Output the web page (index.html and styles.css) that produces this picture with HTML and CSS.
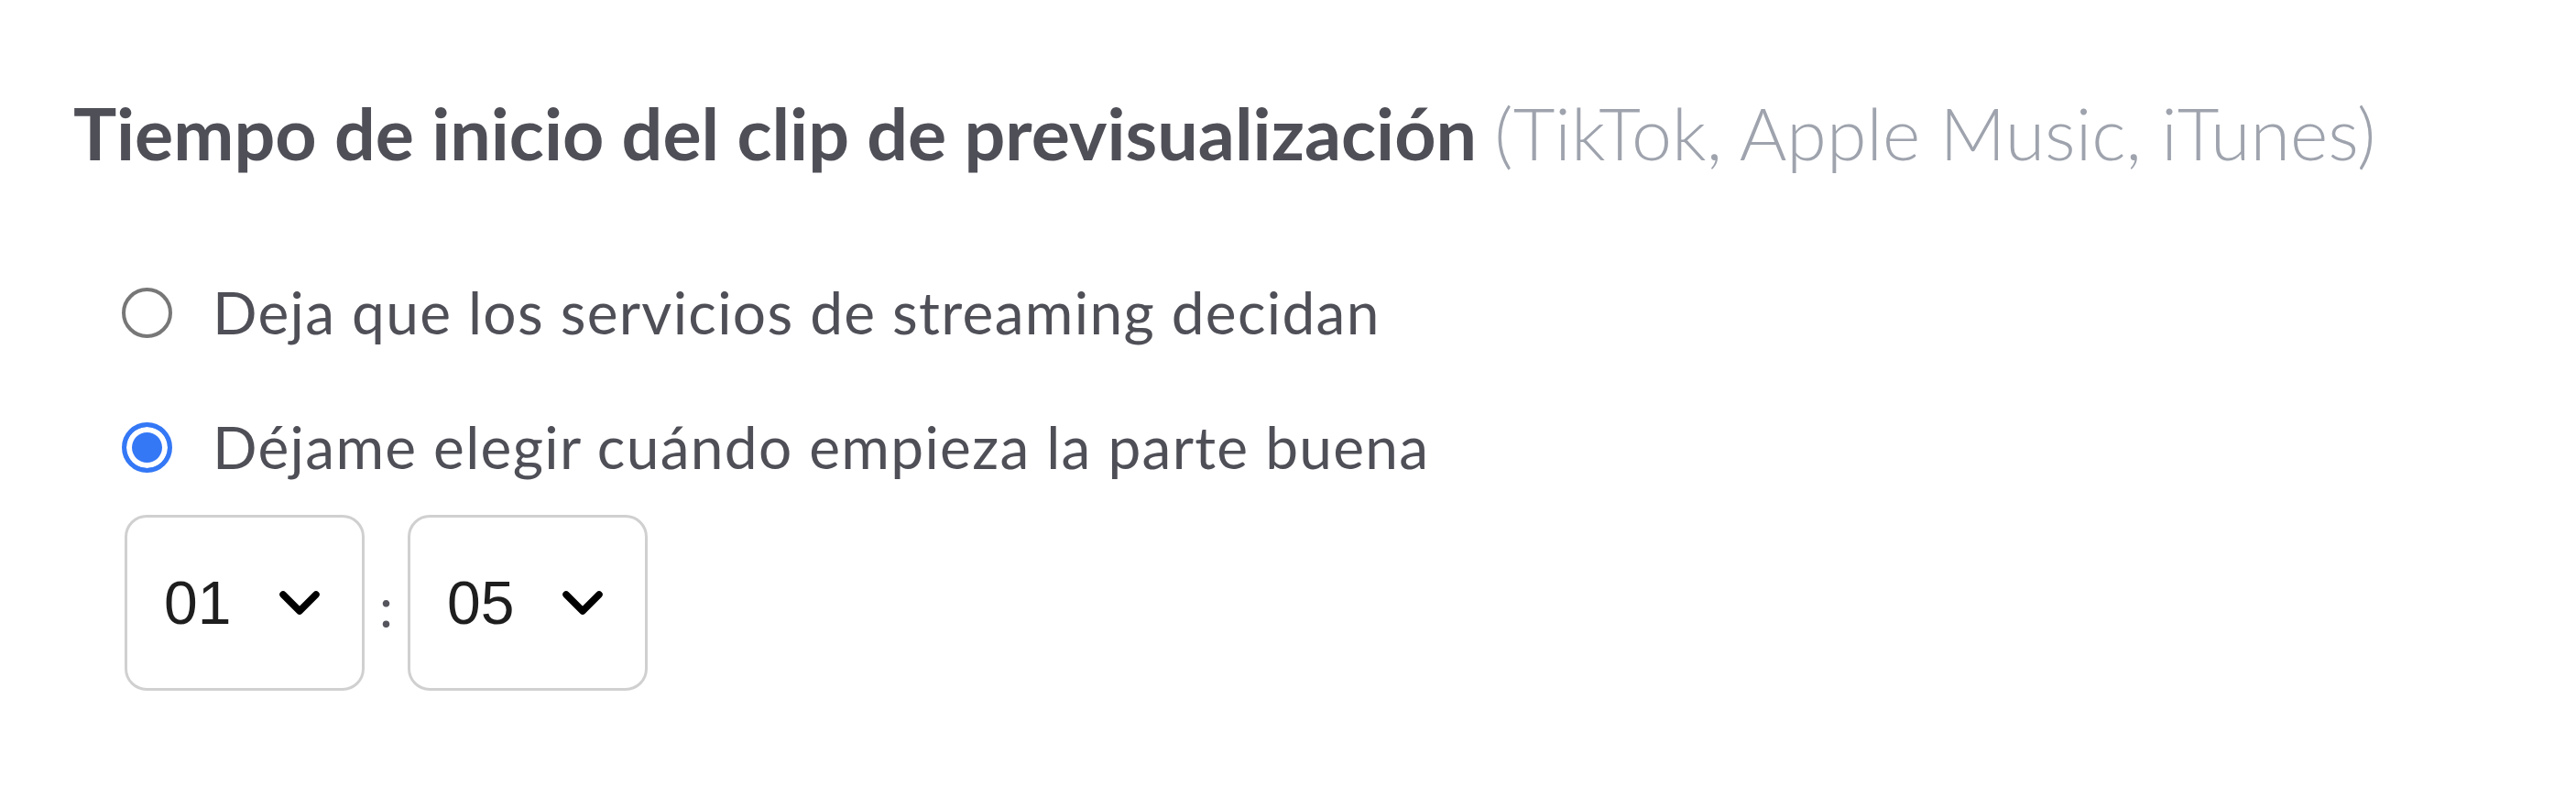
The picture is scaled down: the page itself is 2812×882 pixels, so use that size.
FILE: index.html
```html
<!DOCTYPE html>
<html lang="es">
<head>
<meta charset="utf-8">
<title>Tiempo de inicio del clip</title>
<link rel="stylesheet" href="styles.css">
</head>
<body>
<section class="panel">
  <h2 class="title">Tiempo de inicio del clip de previsualización <span class="title-note">(TikTok, Apple Music, iTunes)</span></h2>
  <div class="options">
    <label class="option">
      <input type="radio" name="clip" class="radio">
      <span class="option-text">Deja que los servicios de streaming decidan</span>
    </label>
    <label class="option">
      <input type="radio" name="clip" class="radio" checked>
      <span class="option-text">Déjame elegir cuándo empieza la parte buena</span>
    </label>
  </div>
  <div class="time">
    <div class="select">
      <span class="select-value">01</span>
      <svg class="chevron" viewBox="0 0 44 26" width="44" height="26"><path d="M4 4 L22 22 L40 4" fill="none" stroke="#000" stroke-width="7.5" stroke-linecap="round" stroke-linejoin="round"/></svg>
    </div>
    <span class="colon">:</span>
    <div class="select">
      <span class="select-value">05</span>
      <svg class="chevron" viewBox="0 0 44 26" width="44" height="26"><path d="M4 4 L22 22 L40 4" fill="none" stroke="#000" stroke-width="7.5" stroke-linecap="round" stroke-linejoin="round"/></svg>
    </div>
  </div>
</section>
</body>
</html>
```
FILE: styles.css
```css
* { box-sizing: border-box; }
html, body { margin: 0; padding: 0; background: #fff; }
body { font-family: Lato, "Noto Sans", sans-serif; color: #4f4f58; }

.panel {
  padding: 97px 0 0 80px;
}

.title {
  margin: 0;
  font-size: 79px;
  line-height: 96px;
  font-weight: 700;
  color: #4f4f58;
  white-space: nowrap;
}
.title-note {
  font-weight: 300;
  color: #9ea3ad;
}

.options {
  margin-top: 112px;
  display: flex;
  flex-direction: column;
  gap: 75px;
  padding-left: 53px;
}
.option {
  display: flex;
  align-items: center;
  gap: 44px;
  height: 72px;
  font-size: 64px;
  line-height: 72px;
  letter-spacing: 1.3px;
}
.radio {
  appearance: none;
  -webkit-appearance: none;
  margin: 0;
  width: 55px;
  height: 55px;
  border-radius: 50%;
  border: 4px solid #777;
  background: #fff;
  flex: none;
}
.radio:checked {
  border: 5px solid #3478f6;
  box-shadow: inset 0 0 0 6px #fff;
  background: #3478f6;
}
.option-text { color: #4f4f58; }

.time {
  margin-top: 38px;
  padding-left: 56px;
  display: flex;
  align-items: center;
  gap: 16px;
}
.select {
  width: 262px;
  height: 192px;
  border: 3px solid #d0d0d0;
  border-radius: 24px;
  display: flex;
  align-items: center;
  justify-content: space-between;
  padding: 0 46px 0 40px;
  background: #fff;
}
.select-value {
  font-family: "Liberation Sans", Arial, sans-serif;
  font-size: 66px;
  color: #1e1e1e;
  line-height: 1;
}
.chevron { display: block; }
.colon {
  font-size: 60px;
  color: #55555d;
  line-height: 1;
  margin-top: 8px;
}
```
